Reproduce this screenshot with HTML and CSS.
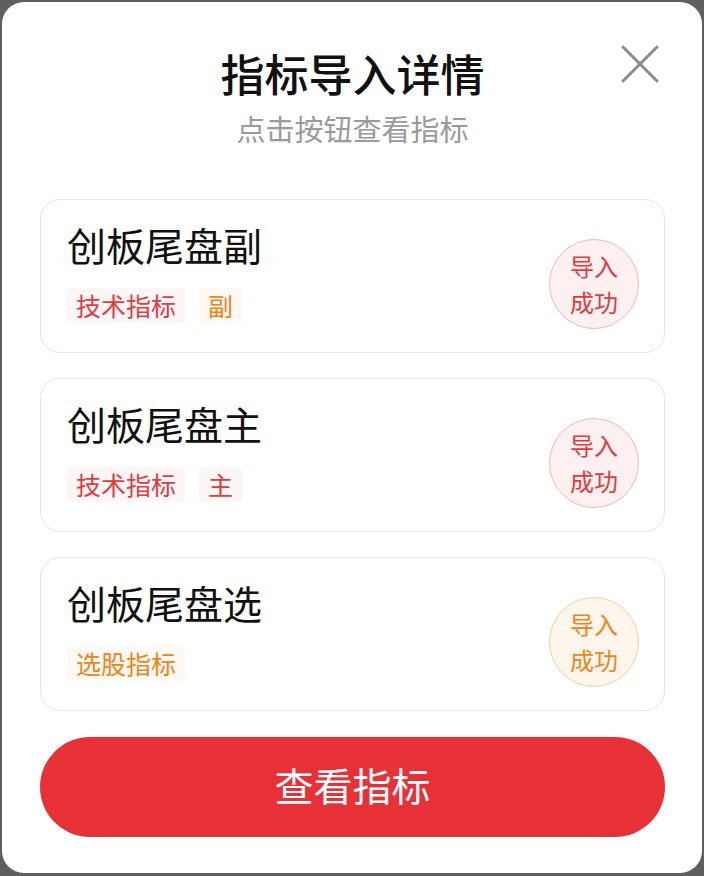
FILE: index.html
```html
<!DOCTYPE html>
<html>
    <head>
        <title>指标导入详情</title>
        <link rel="stylesheet" href="styles.css">
    </head>
    <body>
        <div class="modal">
            <button class="close">
                <svg width="38" height="38" viewBox="0 0 38 38">
                    <path d="M2 2 L36 36 M36 2 L2 36" stroke="#8a8a8a" stroke-width="3" stroke-linecap="round" fill="none"/>
                </svg>
            </button>

            <h1 class="title">指标导入详情</h1>
            <div class="subtitle">点击按钮查看指标</div>

            <div class="list">
                <div class="card">
                    <div class="info">
                        <div class="name">创板尾盘副</div>
                        <div class="tags">
                            <span class="tag red">技术指标</span>
                            <span class="tag orange">副</span>
                        </div>
                    </div>
                    <div class="badge red">导入<br>成功</div>
                </div>

                <div class="card">
                    <div class="info">
                        <div class="name">创板尾盘主</div>
                        <div class="tags">
                            <span class="tag red">技术指标</span>
                            <span class="tag red">主</span>
                        </div>
                    </div>
                    <div class="badge red">导入<br>成功</div>
                </div>

                <div class="card">
                    <div class="info">
                        <div class="name">创板尾盘选</div>
                        <div class="tags">
                            <span class="tag orange">选股指标</span>
                        </div>
                    </div>
                    <div class="badge orange">导入<br>成功</div>
                </div>
            </div>

            <button class="view">查看指标</button>
        </div>
    </body>
</html>
```

FILE: styles.css
```css
body {
    margin: 0;
    padding: 2px;
    background: #5f5f5f;
    font-family: "Noto Sans CJK SC", "Noto Sans", sans-serif;
}

.modal {
    position: relative;
    height: 871px;
    box-sizing: border-box;
    background: #fff;
    border-radius: 22px;
    padding: 44px 37px 0 38px;
}

.close {
    position: absolute;
    top: 43px;
    right: 43px;
    padding: 0;
    border: none;
    background: none;
    width: 38px;
    height: 38px;
}

.title {
    margin: 0;
    text-align: center;
    font-size: 44px;
    line-height: 54px;
    font-weight: 500;
    color: #111;
}

.subtitle {
    margin-top: 10px;
    text-align: center;
    font-size: 29px;
    line-height: 36px;
    color: #9a9a9a;
}

.list {
    margin-top: 53px;
    display: flex;
    flex-direction: column;
    gap: 25px;
}

.card {
    height: 154px;
    box-sizing: border-box;
    border: 1px solid #e6e6e6;
    border-radius: 20px;
    padding: 20px 25px 0 26px;
    display: flex;
    justify-content: space-between;
}

.name {
    font-size: 39px;
    line-height: 48px;
    color: #111;
}

.tags {
    margin-top: 20px;
    display: flex;
    gap: 14px;
}

.tag {
    font-size: 25px;
    line-height: 35px;
    padding: 0 9px;
    border-radius: 4px;
}

.tag.red {
    color: #e23a3f;
    background: #fdf6f6;
}

.tag.orange {
    color: #f0831a;
    background: #fef9f2;
}

.badge {
    margin-top: 19px;
    width: 90px;
    height: 90px;
    box-sizing: border-box;
    border-radius: 50%;
    display: flex;
    align-items: center;
    justify-content: center;
    text-align: center;
    font-size: 24px;
    line-height: 36px;
}

.badge.red {
    color: #e23a3f;
    background: #fdf0f0;
    border: 1px solid #efb9bb;
}

.badge.orange {
    color: #f0831a;
    background: #fef6ec;
    border: 1px solid #f5cfa3;
}

.view {
    margin-top: 26px;
    width: 100%;
    height: 100px;
    padding: 0 0 6px;
    border: none;
    border-radius: 50px;
    background: #e83137;
    color: #fff;
    font-family: inherit;
    font-size: 39px;
}
```
